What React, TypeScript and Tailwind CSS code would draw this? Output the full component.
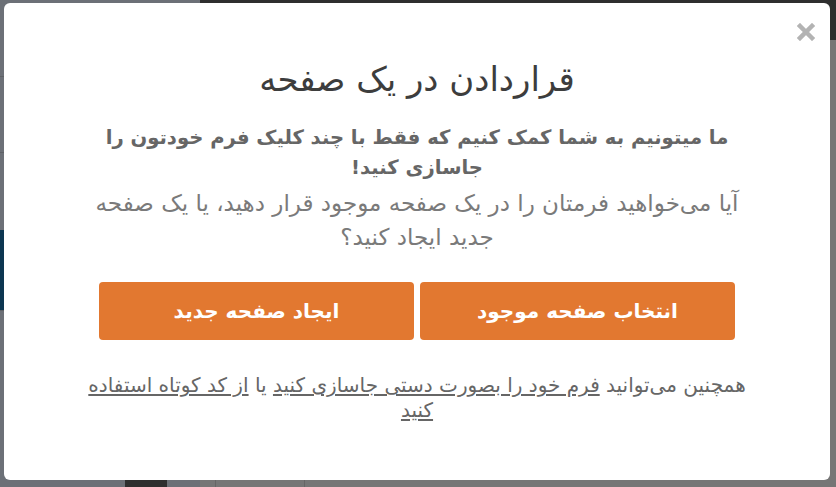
function CloseIcon() {
  return (
    <svg width="18" height="18" viewBox="0 0 18 18" aria-hidden="true">
      <path d="M3 3 L15 15 M15 3 L3 15" stroke="#b3b3b3" strokeWidth="4.5" strokeLinecap="square" />
    </svg>
  )
}

export default function App() {
  const font = { fontFamily: '"DejaVu Sans", "Noto Sans", sans-serif' }

  return (
    <div className="relative w-[836px] h-[487px] overflow-hidden bg-[#767676]" style={font}>
      {/* dimmed page behind the modal */}
      <div className="flex h-full">
        <div className="w-[200px] h-full bg-[#6c7077] flex flex-col">
          <div className="h-[76px]" />
          <div className="h-[76px] border-t border-[#5e6166]" />
          <div className="h-[78px] border-t border-[#5e6166]" />
          <div className="h-[80px] bg-[#0d3651]" />
          <div className="flex-1 border-t border-[#5e6166]" />
        </div>
        <div className="flex-1 h-full flex flex-col">
          <div className="h-[40px] bg-[#2e2e2e]" />
          <div className="flex-1" />
        </div>
      </div>
      <div className="absolute left-[125px] bottom-0 w-[42px] h-[7px] bg-[#2f2f2f]" />
      <div className="absolute left-[215px] bottom-0 w-[90px] h-[7px] border-x border-[#666]" />

      {/* modal */}
      <div
        dir="rtl"
        className="absolute left-[4px] top-[3px] w-[826px] h-[477px] rounded-[6px] bg-white flex flex-col items-center"
      >
        <button className="absolute left-[793px] top-[20px] p-0" aria-label="close">
          <CloseIcon />
        </button>

        <h2 className="mt-[56px] text-[34px] leading-[40px] text-[#3d3d3d] font-normal">
          قراردادن در یک صفحه
        </h2>

        <div className="mt-[24px] w-[700px] text-center">
          <p className="font-bold text-[19.6px] text-[#666666] leading-[30px]">
            ما میتونیم به شما کمک کنیم که فقط با چند کلیک فرم خودتون را
            <br />
            جاسازی کنید!
          </p>
          <p className="mt-[3px] text-[23px] text-[#7a7a7a] leading-[34px]">
            آیا می‌خواهید فرمتان را در یک صفحه موجود قرار دهید، یا یک صفحه
            <br />
            جدید ایجاد کنید؟
          </p>
        </div>

        <div className="mt-[28px] flex gap-[6px]">
          <button className="w-[315px] h-[58px] rounded-[4px] bg-[#e27830] text-white text-[20px] font-bold">
            انتخاب صفحه موجود
          </button>
          <button className="w-[315px] h-[58px] rounded-[4px] bg-[#e27830] text-white text-[20px] font-bold">
            ایجاد صفحه جدید
          </button>
        </div>

        <p className="mt-[33px] w-[720px] text-center text-[20px] leading-[25px] text-[#666666]">
          همچنین می‌توانید{' '}
          <a className="underline underline-offset-2 cursor-pointer">فرم خود را بصورت دستی جاسازی کنید</a>
          {' '}یا{' '}
          <a className="underline underline-offset-2 cursor-pointer">
            از کد کوتاه استفاده
            <br />
            کنید
          </a>
        </p>
      </div>
    </div>
  )
}
